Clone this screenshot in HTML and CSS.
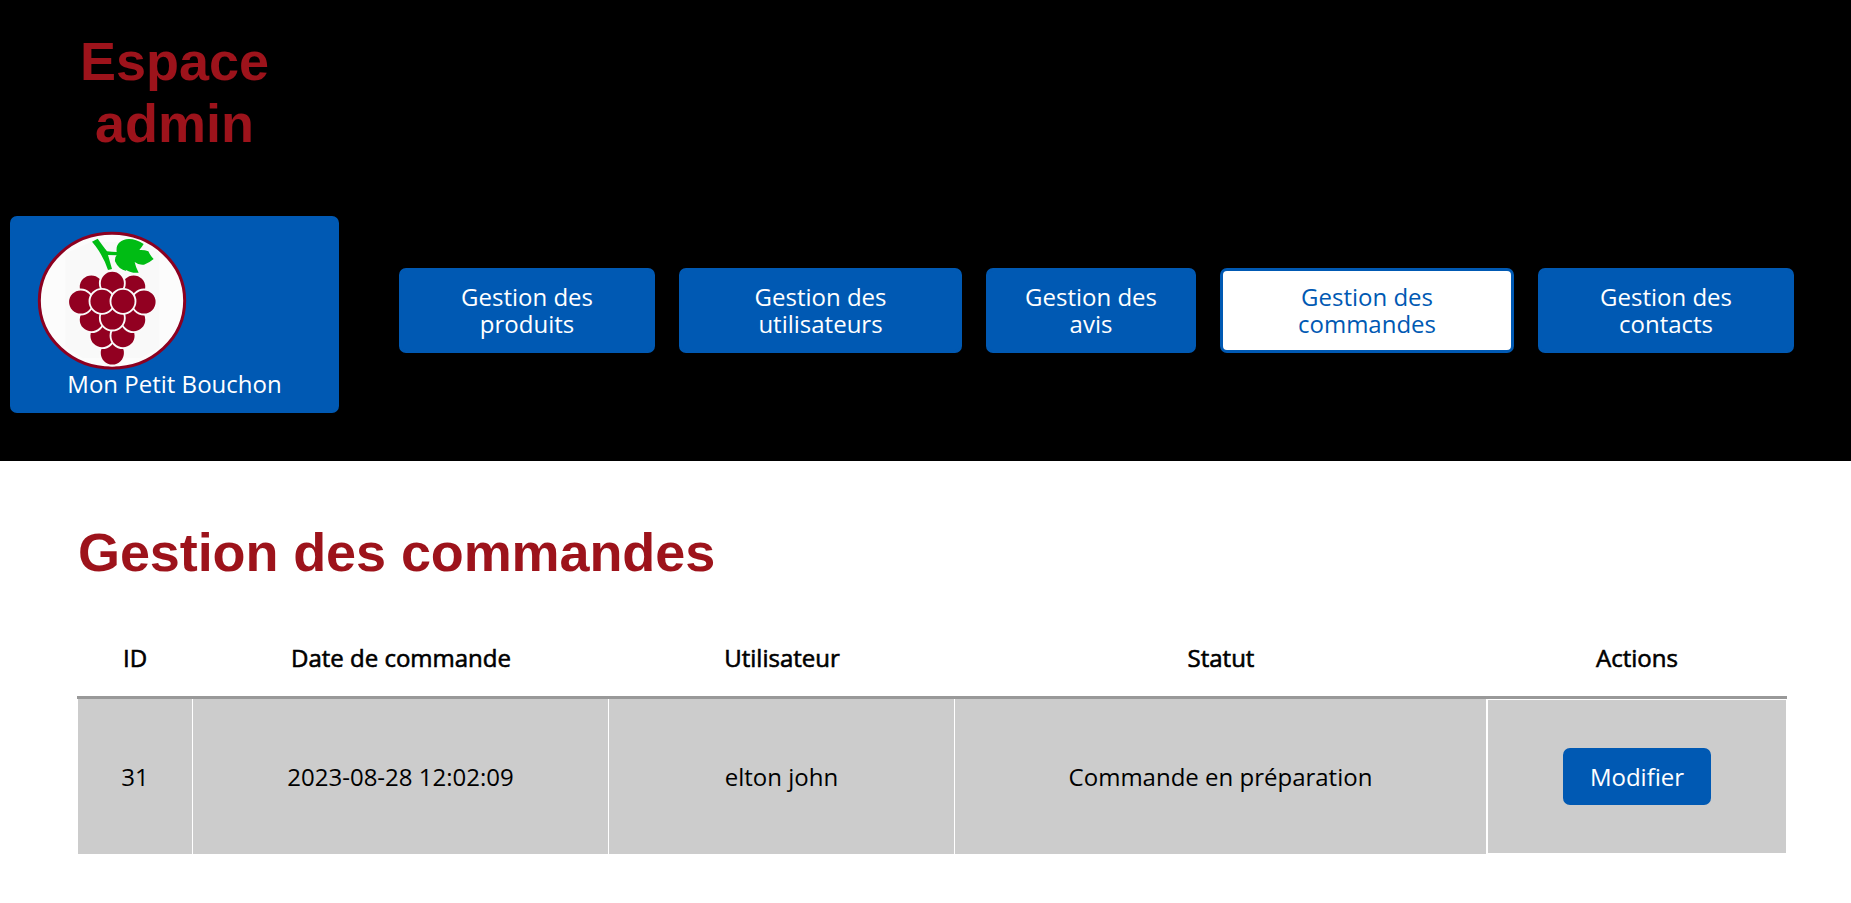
FILE: index.html
```html
<!DOCTYPE html>
<html lang="fr">
<head>
<meta charset="utf-8">
<title>Gestion des commandes</title>
<link rel="stylesheet" href="styles.css">
</head>
<body>
<header class="header">
  <div class="brand">
    <h1 class="title brand-title">Espace admin</h1>
    <a class="btn logo-link">
      <svg class="logo" viewBox="21 18 450 417">
        <ellipse cx="246" cy="227" rx="218" ry="202" fill="#fcfcfc" stroke="#8c0020" stroke-width="9"/>
        <path fill="#f9f9f9" d="M106 85 L186 50 H330 L388 85 V368 L330 400 H160 L106 365 Z"/>
        <path fill="#00bc14" d="M186 50 L203 41 C211 52 222 67 231 79 Q246 81 260 81 C257 58 270 43 297 42 Q318 42 341 57 Q335 67 328 75 Q343 74 355 79 Q361 92 371 102 Q357 114 342 119 Q326 121 314 111 Q317 127 326 143 Q303 145 287 134 L289 138 Q266 134 255 109 Q254 96 260 91 L234 90 Q240 111 246 132 L234 135 Q222 98 197 64 Z"/>
        <g fill="#920021" stroke="#fafafa" stroke-width="5.500">
          <circle cx="247" cy="384" r="37.500"/>
          <circle cx="216" cy="332" r="37.500"/>
          <circle cx="279" cy="332" r="37.500"/>
          <circle cx="184" cy="284" r="37.500"/>
          <circle cx="311" cy="284" r="37.500"/>
          <circle cx="247" cy="279" r="37.500"/>
          <circle cx="184" cy="186" r="37.500"/>
          <circle cx="311" cy="186" r="37.500"/>
          <circle cx="247" cy="175" r="37.500"/>
          <circle cx="152" cy="231" r="37.500"/>
          <circle cx="342" cy="231" r="37.500"/>
          <circle cx="216" cy="229" r="37.500"/>
          <circle cx="279" cy="229" r="37.500"/>
        </g>
      </svg>
      <span class="logo-text">Mon Petit Bouchon</span>
    </a>
  </div>
  <nav class="nav">
    <a class="btn nav-btn w-256">Gestion des<br>produits</a>
    <a class="btn nav-btn w-283">Gestion des<br>utilisateurs</a>
    <a class="btn nav-btn w-210">Gestion des<br>avis</a>
    <a class="btn nav-btn w-294 active">Gestion des<br>commandes</a>
    <a class="btn nav-btn w-256">Gestion des<br>contacts</a>
  </nav>
</header>
<main class="main">
  <h1 class="title page-title">Gestion des commandes</h1>
  <div class="table">
    <div class="row head">
      <div>ID</div><div>Date de commande</div><div>Utilisateur</div><div>Statut</div><div>Actions</div>
    </div>
    <div class="row body">
      <div class="cell">31</div>
      <div class="cell">2023-08-28 12:02:09</div>
      <div class="cell">elton john</div>
      <div class="cell">Commande en préparation</div>
      <div class="cell actions"><a class="btn modify">Modifier</a></div>
    </div>
  </div>
</main>
</body>
</html>
```
FILE: styles.css
```css
* { box-sizing: border-box; }
body {
  margin: 0;
  background: #fff;
  color: #000;
  font: 400 24px/27px "Open Sans", sans-serif;
}
.title {
  margin: 0;
  color: #9d131b;
  font: 700 54px/62px "Liberation Sans", Arial, sans-serif;
}
.btn {
  display: flex;
  justify-content: center;
  align-items: center;
  border: 3px solid #0059b3;
  border-radius: 7px;
  background: #0059b3;
  color: #fff;
  text-align: center;
}
.header {
  display: flex;
  height: 461px;
  padding-left: 10px;
  background: #000;
}
.brand { width: 329px; padding-top: 30px; }
.brand-title { width: 200px; margin: 0 auto 62px; text-align: center; }
.logo-link {
  flex-direction: column;
  height: 197px;
  padding: 12px 24px;
  justify-content: flex-start;
}
.logo { width: 150px; height: 139px; align-self: flex-start; }
.nav { display: flex; gap: 24px; padding: 268px 0 0 60px; }
.nav-btn { height: 85px; padding-bottom: 2px; }
.w-210 { width: 210px; }
.w-256 { width: 256px; }
.w-283 { width: 283px; }
.w-294 { width: 294px; }
.active { background: #fff; color: #0059b3; }
.main { padding: 60px 64px 0 77px; }
.page-title { padding-left: 1px; letter-spacing: -0.1px; }
.table { margin-top: 37px; }
.row {
  display: grid;
  grid-template-columns: 116px 416px 346px 532px 300px;
  align-items: center;
  text-align: center;
}
.head { height: 79px; padding-bottom: 2px; border-bottom: 3px solid #999; font-weight: 500; -webkit-text-stroke: 0.6px #000; }
.body { height: 155px; padding-left: 1px; grid-template-columns: 115px 416px 346px 532px 299px; align-items: stretch; }
.cell {
  display: flex;
  align-items: center;
  justify-content: center;
  border-right: 1px solid #fff;
  background: #ccc;
}
.actions { border: 1px solid #fff; border-right-width: 0; }
.modify { width: 148px; height: 57px; }
```
